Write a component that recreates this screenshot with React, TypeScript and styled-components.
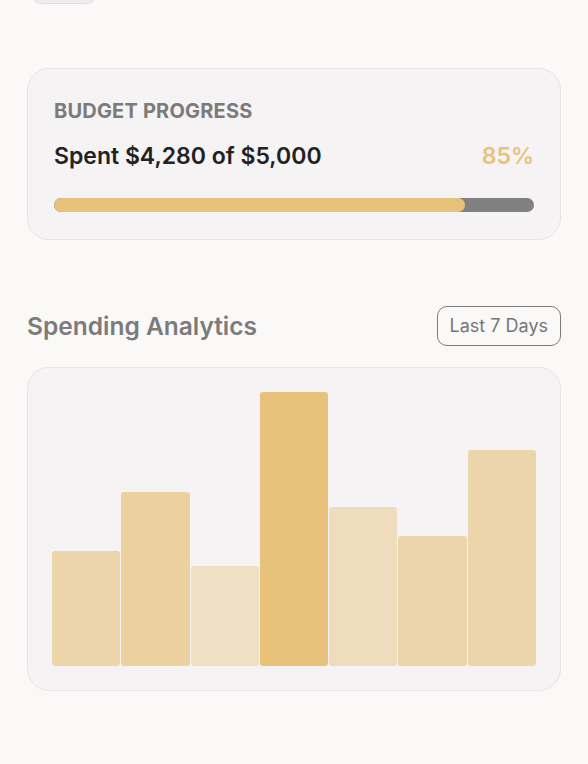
import React from 'react'
import styled, { createGlobalStyle } from 'styled-components'

const GlobalStyle = createGlobalStyle`
  html, body {
    margin: 0;
    padding: 0;
    background: #faf9f7;
  }
  body {
    font-family: Inter, "Noto Sans", "Liberation Sans", sans-serif;
    -webkit-font-smoothing: antialiased;
  }
`

const bars = [
  { value: 42, tone: 0.6 },
  { value: 63.5, tone: 0.7 },
  { value: 36.5, tone: 0.4 },
  { value: 100, tone: 1 },
  { value: 58, tone: 0.45 },
  { value: 47.5, tone: 0.6 },
  { value: 79, tone: 0.6 },
]

const App = () => {
  const spent = 4280
  const budget = 5000
  const pct = Math.floor((spent / budget) * 100)

  return (
    <>
      <GlobalStyle />
      <Page>
        <TopChip />
        <Card>
          <Label>BUDGET PROGRESS</Label>
          <SpentRow>
            <Spent>Spent $4,280 of $5,000</Spent>
            <Percent>{pct}%</Percent>
          </SpentRow>
          <Track>
            <Fill style={{ width: `${(spent / budget) * 100}%` }} />
          </Track>
        </Card>

        <SectionHeader>
          <SectionTitle>Spending Analytics</SectionTitle>
          <RangeButton type="button">Last 7 Days</RangeButton>
        </SectionHeader>

        <ChartCard>
          <Chart>
            {bars.map((b, i) => (
              <Bar key={i} tone={b.tone} style={{ height: `${b.value}%` }} />
            ))}
          </Chart>
        </ChartCard>
      </Page>
    </>
  )
}

const Page = styled.div`
  padding: 0 27px 72px;
  display: flex;
  flex-direction: column;
`

const TopChip = styled.div`
  width: 64px;
  height: 30px;
  margin: -28px 0 0 4px;
  background: #eeecee;
  border: 1px solid #e0dee0;
  border-radius: 10px;
`

const Card = styled.div`
  margin-top: 64px;
  background: #f5f3f4;
  border: 1.5px solid #e6e4e5;
  border-radius: 22px;
  padding: 30px 26px 27px;
`

const Label = styled.div`
  font-size: 20px;
  font-weight: 700;
  letter-spacing: 0.2px;
  color: #7b7b7b;
  line-height: 24px;
`

const SpentRow = styled.div`
  display: flex;
  justify-content: space-between;
  align-items: center;
  margin-top: 19px;
`

const Spent = styled.div`
  font-size: 23px;
  font-weight: 600;
  color: #222222;
  line-height: 28px;
`

const Percent = styled.div`
  font-size: 23px;
  font-weight: 600;
  color: #e8c27a;
  line-height: 28px;
`

const Track = styled.div`
  margin-top: 28px;
  height: 14px;
  border-radius: 7px;
  background: #808080;
  overflow: hidden;
`

const Fill = styled.div`
  height: 100%;
  background: #e8c27a;
  border-radius: 7px;
`

const SectionHeader = styled.div`
  margin-top: 66px;
  display: flex;
  justify-content: space-between;
  align-items: center;
`

const SectionTitle = styled.h2`
  margin: 0;
  font-size: 24.5px;
  font-weight: 600;
  color: #7b7b7b;
`

const RangeButton = styled.button`
  font-family: inherit;
  font-size: 18px;
  font-weight: 400;
  color: #767676;
  background: transparent;
  border: 1.5px solid #7b7b7b;
  border-radius: 10px;
  padding: 9px 12px;
  line-height: 20px;
`

const ChartCard = styled.div`
  margin-top: 21px;
  background: #f5f3f4;
  border: 1.5px solid #e6e4e5;
  border-radius: 22px;
  padding: 24px 24px 24px;
`

const Chart = styled.div`
  height: 274px;
  display: flex;
  align-items: flex-end;
  gap: 1px;
`

const Bar = styled.div<{ tone: number }>`
  flex: 1;
  background: rgba(232, 194, 122, ${(p) => p.tone});
  border-radius: 3px;
`

export default App
